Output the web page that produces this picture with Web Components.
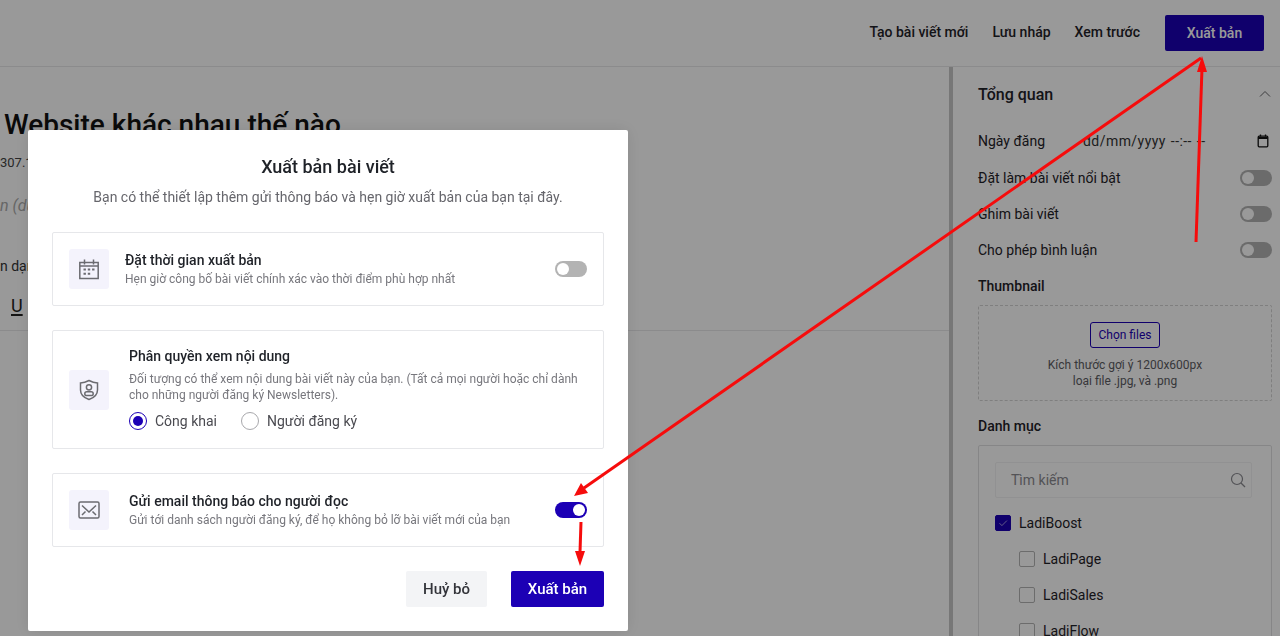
<!DOCTYPE html>
<html lang="vi">
<head>
<meta charset="utf-8">
<title>Xuất bản bài viết</title>
<style>
    html, body { margin: 0; height: 636px; overflow: hidden; background: #fff; }
    body { font-family: Roboto, "Liberation Sans", sans-serif; color: #1f2228; }
    svg[slot] { display: block; }
</style>
</head>
<body>
<top-bar></top-bar>
<div style="display:flex;height:569px;overflow:hidden">
    <article-pane></article-pane>
    <side-panel></side-panel>
</div>
<modal-layer>
    <publish-dialog>
        <publish-card style="--gap:16px">
            <svg slot="icon" width="24" height="24" viewBox="0 0 24 24" fill="none" stroke="#6b6b70" stroke-width="1.5"><path d="M2.8 5.5h18.4v16H2.8zM2.8 9h18.4M7.5 2.5v5M16.5 2.5v5"/><path d="M6.5 12.5h2.4M10.8 12.5h2.4M15.1 12.5h2.4M6.5 16.8h2.4M10.8 16.8h2.4" stroke-width="2"/></svg>
            <span slot="heading">Đặt thời gian xuất bản</span>
            Hẹn giờ công bố bài viết chính xác vào thời điểm phù hợp nhất
            <switch-toggle slot="control"></switch-toggle>
        </publish-card>
        <publish-card style="--gap:20px;--pad-y:15px;--desc-gap:5px">
            <svg slot="icon" width="24" height="24" viewBox="0 0 24 24" fill="none" stroke="#6b6b70" stroke-width="1.5"><path d="M12 2.5c3 1.6 5.6 2.3 8.5 2.4v7c0 4.6-3.4 7.8-8.5 9.6-5.100-1.800-8.500-5-8.500-9.600v-7C6.400 4.800 9 4.100 12 2.500z"/><circle cx="12" cy="9.300" r="2.600"/><rect x="7.800" y="13.700" width="8.400" height="3.900" rx="1.950"/></svg>
            <span slot="heading">Phân quyền xem nội dung</span>
            Đối tượng có thể xem nội dung bài viết này của bạn. (Tất cả mọi người hoặc chỉ dành cho những người đăng ký Newsletters).
            <radio-group slot="extra"></radio-group>
        </publish-card>
        <publish-card style="--gap:20px">
            <svg slot="icon" width="24" height="24" viewBox="0 0 24 24" fill="none" stroke="#6b6b70" stroke-width="1.500"><rect x="2" y="4" width="20" height="16" rx="1.500"/><path d="M5 7.500l7 6.500 7-6.500M5 17l3.500-3.500M19 17l-3.500-3.500"/></svg>
            <span slot="heading">Gửi email thông báo cho người đọc</span>
            Gửi tới danh sách người đăng ký, để họ không bỏ lỡ bài viết mới của bạn
            <switch-toggle slot="control" checked></switch-toggle>
        </publish-card>
    </publish-dialog>
</modal-layer>
<annotation-arrows></annotation-arrows>

<script>
class TopBar extends HTMLElement {
    constructor() {
        super();
        this.attachShadow({ mode: 'open' }).innerHTML = /*html*/`
        <style>
            :host { display: flex; justify-content: flex-end; align-items: center; gap: 24px; height: 66px; padding-right: 16px; border-bottom: 1px solid #e8e8ea; box-sizing: content-box; font-size: 14px; font-weight: 500; color: #1f2228; }
            a { line-height: 20px; margin-top: -2px; }
            button { all: unset; box-sizing: border-box; width: 99px; height: 36px; margin-left: 1px; background: #1c00b5; color: #fff; border-radius: 2px; text-align: center; line-height: 32px; }
        </style>
        <a>Tạo bài viết mới</a><a>Lưu nháp</a><a>Xem trước</a><button>Xuất bản</button>`;
    }
}

class ArticlePane extends HTMLElement {
    constructor() {
        super();
        this.attachShadow({ mode: 'open' }).innerHTML = /*html*/`
        <style>
            :host { display: block; width: 949px; flex: none; box-sizing: border-box; overflow: hidden; }
            h1 { margin: 40px 0 0 4px; font-size: 28px; font-weight: 500; line-height: 36px; color: #111; white-space: nowrap; }
            .meta { margin-top: 11px; font-size: 13px; line-height: 18px; color: #444; }
            .lead { margin-top: 21px; font-size: 16px; line-height: 26px; font-style: italic; color: #aaa; }
            .fmt { margin-top: 37px; font-size: 14px; line-height: 20px; color: #333; }
            .tools { margin-top: 20px; padding: 0 0 14px 11px; border-bottom: 1px solid #e8e8ea; font-size: 18px; line-height: 20px; color: #222; }
            u { text-underline-offset: 2px; text-decoration-thickness: 2px; }
        </style>
        <h1>Website khác nhau thế nào</h1>
        <div class="meta">307.1</div>
        <div class="lead">n (dù</div>
        <div class="fmt">n dạng</div>
        <div class="tools"><u>U</u></div>`;
    }
}

class SwitchToggle extends HTMLElement {
    constructor() {
        super();
        this.attachShadow({ mode: 'open' }).innerHTML = /*html*/`
        <style>
            :host { display: flex; box-sizing: border-box; width: 32px; height: 16px; padding: 2px; border-radius: 8px; background: #b3b3b3; flex: none; }
            :host([checked]) { background: #1c00b5; justify-content: flex-end; }
            i { width: 12px; height: 12px; border-radius: 50%; background: #fff; }
        </style>
        <i></i>`;
    }
}

class CheckRow extends HTMLElement {
    constructor() {
        super();
        this.attachShadow({ mode: 'open' }).innerHTML = /*html*/`
        <style>
            :host { display: flex; align-items: center; gap: 8px; height: 20px; font-size: 14px; color: #1f2228; }
            :host([indent]) { padding-left: 24px; }
            b { display: flex; align-items: center; justify-content: center; box-sizing: border-box; width: 16px; height: 16px; border: 1px solid #b5b5b5; border-radius: 2px; background: #fff; }
            :host([checked]) b { background: #1c00b5; border-color: #1c00b5; }
            svg { display: none; }
            :host([checked]) svg { display: block; }
        </style>
        <b><svg width="10" height="10" viewBox="0 0 10 10" fill="none" stroke="#fff" stroke-width="0.600"><path d="M1.500 5.200l2.400 2.400 5-5"/></svg></b><slot></slot>`;
    }
}

class SidePanel extends HTMLElement {
    constructor() {
        super();
        this.attachShadow({ mode: 'open' }).innerHTML = /*html*/`
        <style>
            :host { display: block; flex: 1; box-sizing: border-box; border-left: 4px solid #c6c6c6; padding: 0 8px 0 25px; font-size: 14px; color: #1f2228; overflow: hidden; }
            .head { display: flex; justify-content: space-between; align-items: center; height: 24px; margin-top: 15px; font-size: 16px; font-weight: 500; }
            .row { display: flex; align-items: center; justify-content: space-between; height: 20px; margin-top: 16px; }
            .head + .row { margin-top: 25px; }
            .date + .row { margin-top: 17px; }
            .date { display: flex; align-items: center; gap: 0; }
            .date span:first-child { width: 105px; }
            .date .val { width: 170px; letter-spacing: .45px; word-spacing: 1px; color: #333; }
            h4 { margin: 16px 0 0; font-size: 14px; font-weight: 500; line-height: 20px; }
            .drop { box-sizing: border-box; height: 96px; margin-top: 9px; padding-top: 16px; border: 1px dashed #d4d4d4; border-radius: 2px; text-align: center; font-size: 12px; line-height: 16px; color: #5d5d63; }
            .pick { display: inline-block; box-sizing: border-box; width: 70px; height: 26px; line-height: 24px; margin-bottom: 9px; border: 1px solid #1c00b5; border-radius: 3px; color: #1c00b5; }
            .cats { box-sizing: border-box; height: 260px; margin-top: 9px; padding: 16px; border: 1px solid #e0e0e2; border-radius: 2px; }
            .search { display: flex; align-items: center; justify-content: space-between; box-sizing: border-box; width: 257px; height: 36px; padding: 0 5px 0 15px; border: 1px solid #f2f2f3; border-radius: 2px; color: #8a8a90; margin-bottom: 15px; }
            check-row { margin-bottom: 16px; }
        </style>
        <div class="head">Tổng quan
            <svg width="14" height="14" viewBox="0 0 14 14" fill="none" stroke="#66666a" stroke-width="1"><path d="M2 9.500l5-5 5 5"/></svg>
        </div>
        <div class="row date"><span>Ngày đăng</span><span class="val">dd/mm/yyyy --:-- --</span>
            <svg width="12" height="14" viewBox="0 0 12 14" fill="none" stroke="#111" stroke-width="1.300" style="margin-left:auto;margin-right:3px"><rect x="1.200" y="2.200" width="9.600" height="10.600" rx="1"/><path d="M1.200 4h9.600" stroke-width="2"/><path d="M3.500 0.500v2M8.500 0.500v2"/></svg>
        </div>
        <div class="row">Đặt làm bài viết nổi bật<switch-toggle></switch-toggle></div>
        <div class="row">Ghim bài viết<switch-toggle></switch-toggle></div>
        <div class="row">Cho phép bình luận<switch-toggle></switch-toggle></div>
        <h4>Thumbnail</h4>
        <div class="drop"><span class="pick">Chọn files</span><br>Kích thước gợi ý 1200x600px<br>loại file .jpg, và .png</div>
        <h4 style="margin-top:15px">Danh mục</h4>
        <div class="cats">
            <div class="search">Tìm kiếm
                <svg width="16" height="16" viewBox="0 0 16 16" fill="none" stroke="#8a8a90" stroke-width="1.200"><circle cx="7" cy="7" r="5.500"/><path d="M11 11l4 4"/></svg>
            </div>
            <check-row checked>LadiBoost</check-row>
            <check-row indent>LadiPage</check-row>
            <check-row indent>LadiSales</check-row>
            <check-row indent>LadiFlow</check-row>
        </div>`;
    }
}

class ModalLayer extends HTMLElement {
    constructor() {
        super();
        this.attachShadow({ mode: 'open' }).innerHTML = /*html*/`
        <style>
            :host { position: fixed; inset: 0; display: block; box-sizing: border-box; padding: 130px 0 0 28px; background: rgba(0,0,0,.4); }
        </style>
        <slot></slot>`;
    }
}

class PublishDialog extends HTMLElement {
    constructor() {
        super();
        this.attachShadow({ mode: 'open' }).innerHTML = /*html*/`
        <style>
            :host { display: flex; flex-direction: column; box-sizing: border-box; width: 600px; height: 501px; padding: 24px; background: #fff; border-radius: 2px; box-shadow: 0 0 16px rgba(0,0,0,.1); }
            h2 { margin: 0; font-size: 18px; font-weight: 500; line-height: 26px; text-align: center; color: #1f2228; }
            p { margin: 6px 0 24px; font-size: 14px; line-height: 22px; text-align: center; color: #66666c; }
            .cards { display: flex; flex-direction: column; gap: 24px; }
            .actions { display: flex; justify-content: flex-end; gap: 24px; margin-top: 24px; }
            button { all: unset; box-sizing: border-box; height: 36px; text-align: center; line-height: 32px; font-size: 15px; font-weight: 500; border-radius: 2px; }
            .cancel { width: 81px; background: #f3f4f6; color: #33343a; }
            .ok { width: 93px; background: #1c00b5; color: #fff; }
        </style>
        <h2>Xuất bản bài viết</h2>
        <p>Bạn có thể thiết lập thêm gửi thông báo và hẹn giờ xuất bản của bạn tại đây.</p>
        <div class="cards"><slot></slot></div>
        <div class="actions"><button class="cancel">Huỷ bỏ</button><button class="ok">Xuất bản</button></div>`;
    }
}

class PublishCard extends HTMLElement {
    constructor() {
        super();
        this.attachShadow({ mode: 'open' }).innerHTML = /*html*/`
        <style>
            :host { display: flex; align-items: center; box-sizing: border-box; gap: var(--gap, 16px); padding: var(--pad-y, 16px) 16px; border: 1px solid #e6e7ea; border-radius: 2px; }
            .icon { display: flex; align-items: center; justify-content: center; flex: none; width: 40px; height: 40px; background: #f4f3fc; border-radius: 3px; }
            .body { flex: 1; min-width: 0; padding-bottom: 2px; }
            .title { font-size: 14px; font-weight: 500; line-height: 20px; color: #1f2228; }
            .desc { margin-top: var(--desc-gap, 1px); font-size: 12px; line-height: 16px; color: #77777d; }
            ::slotted(radio-group) { margin-top: 8px; }
        </style>
        <div class="icon"><slot name="icon"></slot></div>
        <div class="body">
            <div class="title"><slot name="heading"></slot></div>
            <div class="desc"><slot></slot></div>
            <slot name="extra"></slot>
        </div>
        <slot name="control"></slot>`;
    }
}

class RadioGroup extends HTMLElement {
    constructor() {
        super();
        this.attachShadow({ mode: 'open' }).innerHTML = /*html*/`
        <style>
            :host { display: flex; gap: 24px; font-size: 14px; color: #4a4a50; }
            label { display: flex; align-items: center; gap: 8px; line-height: 20px; }
            i { display: flex; align-items: center; justify-content: center; box-sizing: border-box; width: 18px; height: 18px; border: 1px solid #a8a8ac; border-radius: 50%; }
            .on { border-color: #1c00b5; }
            .on::after { content: ""; width: 10px; height: 10px; border-radius: 50%; background: #1c00b5; }
        </style>
        <label><i class="on"></i>Công khai</label>
        <label><i></i>Người đăng ký</label>`;
    }
}

class AnnotationArrows extends HTMLElement {
    constructor() {
        super();
        this.attachShadow({ mode: 'open' }).innerHTML = /*html*/`
        <style>
            :host { position: fixed; inset: 0; display: block; pointer-events: none; }
            svg { display: block; }
        </style>
        <svg width="1280" height="636" fill="#f60c0c" stroke="none">
            <path d="M1201 58L584 488" stroke="#f60c0c" stroke-width="3"/>
            <path d="M574 496l7-13 7 10z"/>
            <path d="M1196 242L1202 68" stroke="#f60c0c" stroke-width="3"/>
            <path d="M1202 56l5 16h-10z"/>
            <path d="M581 522L580 552" stroke="#f60c0c" stroke-width="3"/>
            <path d="M580 566l-5-15h10z"/>
        </svg>`;
    }
}

customElements.define('top-bar', TopBar);
customElements.define('article-pane', ArticlePane);
customElements.define('switch-toggle', SwitchToggle);
customElements.define('check-row', CheckRow);
customElements.define('side-panel', SidePanel);
customElements.define('modal-layer', ModalLayer);
customElements.define('publish-dialog', PublishDialog);
customElements.define('publish-card', PublishCard);
customElements.define('radio-group', RadioGroup);
customElements.define('annotation-arrows', AnnotationArrows);
</script>
</body>
</html>
